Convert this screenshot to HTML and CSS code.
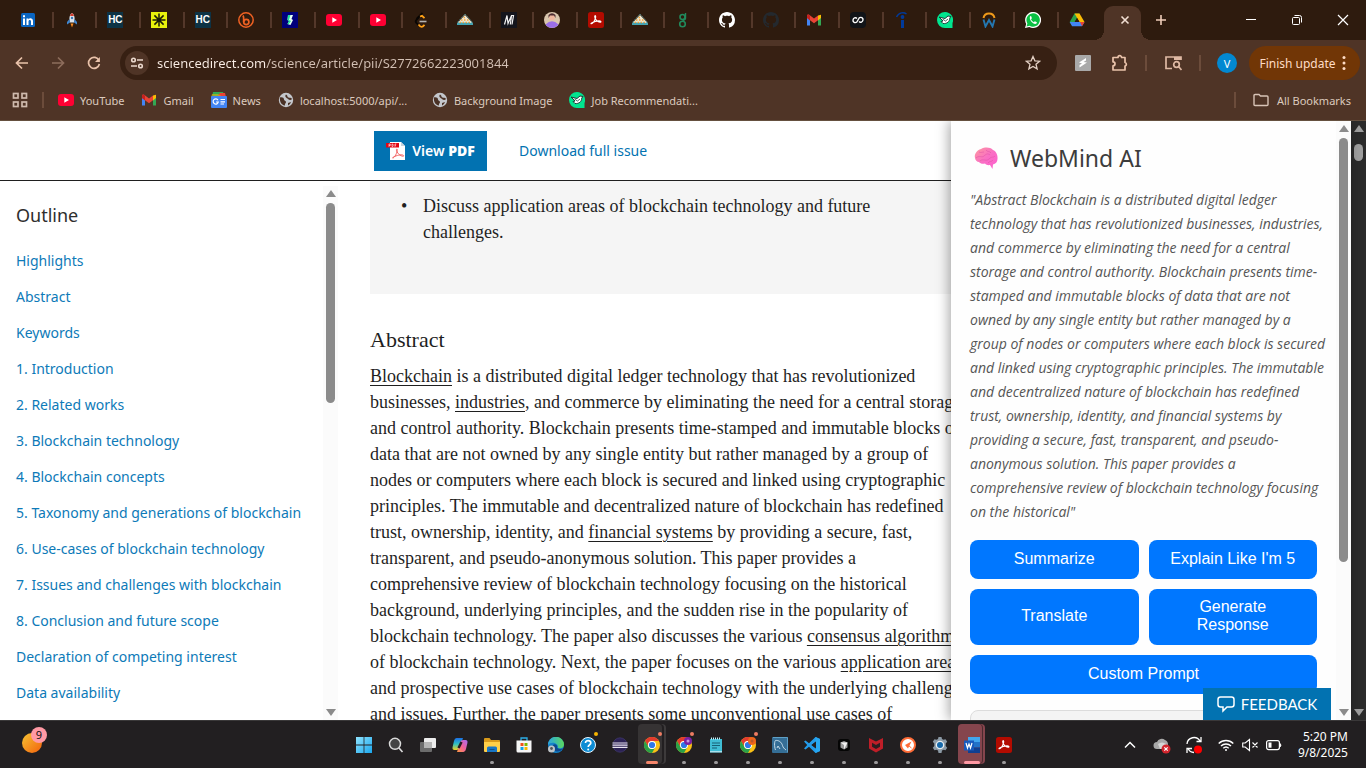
FILE: index.html
```html
<!DOCTYPE html>
<html lang="en">
<head>
<meta charset="utf-8">
<title>Blockchain technology - ScienceDirect</title>
<link rel="stylesheet" href="styles.css">
</head>
<body>
<svg class="defs" aria-hidden="true">
  <defs>
    <linearGradient id="g-win" x1="0" y1="0" x2="1" y2="1"><stop offset="0" stop-color="#8fe3ff"/><stop offset="1" stop-color="#1aa7ee"/></linearGradient>
    <linearGradient id="g-sun" x1="0" y1="0" x2="1" y2="1"><stop offset="0" stop-color="#f6c433"/><stop offset="1" stop-color="#f2600c"/></linearGradient>
    <linearGradient id="g-brain" x1="0" y1="0" x2="1" y2="1"><stop offset="0" stop-color="#ff9a9e"/><stop offset=".5" stop-color="#f96fc4"/><stop offset="1" stop-color="#ff5fd0"/></linearGradient>
    <linearGradient id="g-edge" x1="0" y1="0" x2="1" y2="0"><stop offset="0" stop-color="#2aa5e0"/><stop offset="1" stop-color="#5bd95e"/></linearGradient>
    <linearGradient id="g-cop1" x1="0" y1="0" x2="0" y2="1"><stop offset="0" stop-color="#1b6fe8"/><stop offset=".5" stop-color="#2fc0c0"/><stop offset="1" stop-color="#f0d020"/></linearGradient>
    <linearGradient id="g-cop2" x1="1" y1="0" x2="0" y2="1"><stop offset="0" stop-color="#a66cf5"/><stop offset=".5" stop-color="#f0609a"/><stop offset="1" stop-color="#ff9a40"/></linearGradient>
  </defs>
  <symbol id="i-youtube" viewBox="0 0 16 16"><rect y="2" width="16" height="12" rx="3" fill="#ff0033"/><path d="M6.3 5.3v5.4L11 8z" fill="#fff"/></symbol>
  <symbol id="i-gmail" viewBox="0 0 16 16"><path d="M1 4v9.5h3V8z" fill="#4285f4"/><path d="M15 4v9.5h-3V8z" fill="#34a853"/><path d="M12 3.6 15 2.8V6l-3 2.4z" fill="#fbbc04"/><path d="M1 3.8C1 2.500 2.400 2.200 3.500 2.900L8 6.400l4-3v4.800l-4 3-4-3L1 6z" fill="#ea4335"/><path d="M1 4v2l3 2.400V3.400C2.500 2 1 2.700 1 4z" fill="#c5221f"/></symbol>
  <symbol id="i-tents" viewBox="0 0 16 16"><path d="M8 3l8 8.500H0z" fill="#efe6cf"/><path d="M6.500 5.500h3M4 8h8M2.500 10.300h11" stroke="#f0a43c" stroke-width="1.300" stroke-dasharray="1.500 1.500"/><path d="M7.500 2.500h1L16 11v1.500H0V11z" fill="none" stroke="#6fc0c4" stroke-width=".8" stroke-dasharray="1.500 1"/><path d="M0 11.800q1.600-3 3.200 0 1.600-3 3.200 0 1.600-3 3.200 0 1.600-3 3.200 0 1.600-3 3.200 0v1.200H0z" fill="#42a5b3"/></symbol>
  <symbol id="i-github" viewBox="0 0 16 16"><path fill="currentColor" d="M8 0C3.580 0 0 3.580 0 8c0 3.540 2.290 6.530 5.470 7.590.4.070.550-.170.550-.380 0-.190-.010-.820-.010-1.490-2.010.370-2.530-.490-2.690-.940-.090-.230-.480-.940-.820-1.130-.280-.150-.680-.520-.010-.530.630-.010 1.080.580 1.230.820.720 1.210 1.870.870 2.330.660.070-.520.280-.870.510-1.070-1.780-.200-3.640-.890-3.640-3.950 0-.870.310-1.590.820-2.150-.080-.200-.360-1.020.080-2.120 0 0 .670-.210 2.200.820.640-.180 1.320-.270 2-.270s1.360.090 2 .270c1.530-1.040 2.200-.820 2.200-.820.440 1.100.160 1.920.080 2.120.510.560.820 1.270.820 2.150 0 3.070-1.870 3.750-3.650 3.950.290.250.540.730.540 1.480 0 1.070-.010 1.930-.010 2.200 0 .210.150.460.550.380A8.010 8.010 0 0 0 16 8c0-4.420-3.580-8-8-8z"/></symbol>
  <symbol id="i-bird" viewBox="0 0 16 16"><path d="M8 0a8 8 0 1 0 0 16h7.500V11A8 8 0 0 0 8 0z" fill="#00e58f"/><path d="M2 5l6 1.500L11 4l3 .5-1.200 1.500C12.800 9.500 10 12 6 11.500L4 9.500l2-.5z" fill="#fff" stroke="#173d38" stroke-width="1"/><path d="m5.500 7 3 2 2.500-2" fill="none" stroke="#173d38" stroke-width=".8"/></symbol>
  <symbol id="i-globe" viewBox="0 0 16 16"><circle cx="8" cy="8" r="7.200" fill="#c4c7cc"/><path d="M2 5.500c2.500-.5 4 .5 4 2s2 1 2 2.500-1.500 1.500-1 3.500C3 13 1.500 9 2 5.500zM8 2.500c2 1 1 2.500 2.500 3s2.500-.5 3.500 1.500c-1 1.500-3 1-4 0S6 5 8 2.500zM10 11l3-1c-.5 1.500-1.500 2.500-3 3.500z" fill="#4a3125"/></symbol>
  <symbol id="i-acrobat" viewBox="0 0 16 16"><rect width="16" height="16" rx="2.500" fill="#b30b00"/><path d="M3 11.700c1.500.8 4-3.500 4.600-6 .5-2-.9-2.800-.9-1 0 2.300 3 5.600 5.300 5.600 1.700-.1 1-1.400-1-1.400-2.200 0-5 .7-7 1.900-.8.400-1.200.7-1 .9z" fill="none" stroke="#fff" stroke-width="1.100"/></symbol>
  <symbol id="i-chrome" viewBox="0 0 16 16"><circle cx="8" cy="8" r="8" fill="#fbc116"/><path d="M1.070 4A8 8 0 0 1 14.930 4H8a4 4 0 0 0-3.500 6z" fill="#e33b2e"/><path d="M1.070 4A8 8 0 0 0 8 16l3.500-6a4 4 0 0 1-7 0z" fill="#2aa148"/><circle cx="8" cy="8" r="4" fill="#fff"/><circle cx="8" cy="8" r="3.100" fill="#2f78e8"/></symbol>
</svg>

<div class="window">
  <header class="browser">
    <div class="tabstrip">
      <div class="tabs">
        <button class="tab" aria-label="LinkedIn"><svg viewBox="0 0 16 16"><rect x="1" y="1" width="14" height="14" rx="1.500" fill="#0a66c2"/><path d="M3 6.500h2V13H3zM3 3.200h2v2H3zM6.500 6.500h2v1C9.500 5.700 13 5.900 13 9v4h-2V9.500c0-2-2.500-2-2.500 0V13h-2z" fill="#fff"/></svg></button>
        <button class="tab" aria-label="Rocket"><svg viewBox="0 0 16 16"><path d="M8 1c3 2 3 6 2 9.500H6C5 7 5 3 8 1z" fill="#dce3ea"/><path d="M8 1c1 .7 1.700 1.700 2 3H6c.3-1.300 1-2.300 2-3z" fill="#d23b2d"/><circle cx="8" cy="6" r="1.200" fill="#3b78b5"/><path d="M5.500 7 3 10v2.500l3-2zM10.500 7l2.500 3v2.500l-3-2z" fill="#3f86cf"/><path d="M6.500 11.500h3L8 15.500z" fill="#f68b1f"/></svg></button>
        <button class="tab"><span class="hc">HC</span></button>
        <button class="tab" aria-label="Burst"><svg viewBox="0 0 16 16"><rect width="16" height="16" fill="#e8f20c"/><path d="M8 1.500v13M1.500 8h13M3.400 3.400l9.200 9.200M12.600 3.400l-9.200 9.200" stroke="#1a1c08" stroke-width="1.500"/></svg></button>
        <button class="tab"><span class="hc">HC</span></button>
        <button class="tab" aria-label="Bitly"><svg viewBox="0 0 16 16"><circle cx="8" cy="8" r="7.200" fill="none" stroke="#ee6123" stroke-width="1.500"/><path d="M5 3.500c1.200 2 .5 4 .7 6.500" fill="none" stroke="#ee6123" stroke-width="1.700"/><circle cx="8.300" cy="10" r="2.600" fill="none" stroke="#ee6123" stroke-width="1.700"/></svg></button>
        <button class="tab" aria-label="Script"><svg viewBox="0 0 16 16"><rect width="16" height="16" fill="#00007c"/><path d="M6 3h5L9.500 7 11 8 8.500 13 5.500 12 7 9 5.500 8z" fill="#e8fff5"/><path d="M6 3h2.500L7 8l2 1-2.500 3.500-1-.5L7 9 5.500 8z" fill="#1de39b"/></svg></button>
        <button class="tab" aria-label="YouTube"><svg><use href="#i-youtube"/></svg></button>
        <button class="tab" aria-label="YouTube"><svg><use href="#i-youtube"/></svg></button>
        <button class="tab" aria-label="LeetCode"><svg viewBox="0 0 16 16"><path d="M9.500 1 3.500 7" stroke="#090604" stroke-width="1.800"/><path d="m6 5-2.500 3c-1 1-1 2 0 3l2.500 2.700" fill="none" stroke="#090604" stroke-width="1.800"/><path d="m7 4.500 2-.7 2.500 2.400M5.500 12.500C8 16 9.500 15 11.500 12.800" fill="none" stroke="#ffa116" stroke-width="1.800"/><path d="M6.500 9.500h7" stroke="#b3b3b3" stroke-width="1.600"/></svg></button>
        <button class="tab" aria-label="Camp"><svg><use href="#i-tents"/></svg></button>
        <button class="tab" aria-label="M"><svg viewBox="0 0 16 16"><rect width="16" height="16" fill="#14151c"/><path d="M3.500 12.500 6 3.500l1 8 3.500-8h2L11 12.500M10.500 4 9.300 12.500" fill="none" stroke="#f3f3f3" stroke-width="1.200"/></svg></button>
        <button class="tab" aria-label="Profile"><svg viewBox="0 0 16 16"><circle cx="8" cy="8" r="8" fill="#d9c6ad"/><path d="M1.500 12.500Q8 6 14.500 12.500A8 8 0 0 1 1.500 12.500z" fill="#9a6ee8"/><circle cx="8" cy="5.500" r="2.800" fill="#efb79e"/><path d="M4.500 6V3Q8-.5 11.500 3v3L10 3.500H6z" fill="#4d2c31"/></svg></button>
        <button class="tab" aria-label="Acrobat"><svg><use href="#i-acrobat"/></svg></button>
        <button class="tab" aria-label="Camp"><svg><use href="#i-tents"/></svg></button>
        <button class="tab" aria-label="Glassdoor"><svg viewBox="0 0 16 16"><circle cx="7.500" cy="5" r="2.500" fill="none" stroke="#218a5c" stroke-width="1.600"/><circle cx="7.500" cy="12" r="2.800" fill="none" stroke="#218a5c" stroke-width="1.600"/><path d="M10.500 1v5q0 2-3 2.500" fill="none" stroke="#218a5c" stroke-width="1.400"/></svg></button>
        <button class="tab" aria-label="GitHub"><svg class="white"><use href="#i-github"/></svg></button>
        <button class="tab" aria-label="GitHub"><svg class="ink"><use href="#i-github"/></svg></button>
        <button class="tab" aria-label="Gmail"><svg><use href="#i-gmail"/></svg></button>
        <button class="tab" aria-label="Loop"><svg viewBox="0 0 16 16"><rect width="16" height="16" rx="4" fill="#111418"/><path d="M7 10C5 11.500 2.700 10 3 8s2.500-3 4-1.500M9 6c2-1.500 4.300 0 4 2s-2.500 3-4 1.500M6.500 10.500l3-5" fill="none" stroke="#fff" stroke-width="1.400"/></svg></button>
        <button class="tab" aria-label="Indeed"><svg viewBox="0 0 16 16"><path d="M2.500 5C5 0 10 0 12.500 2" fill="none" stroke="#003a9b" stroke-width="1.400"/><circle cx="8.500" cy="5" r="1.900" fill="#003a9b"/><path d="M7 8h3v8H7z" fill="#003a9b"/></svg></button>
        <button class="tab" aria-label="Jobs"><svg><use href="#i-bird"/></svg></button>
        <button class="tab" aria-label="Wellfound"><svg viewBox="0 0 16 16"><path d="M2.500 6a5.600 5.600 0 0 1 11 0" fill="none" stroke="#ef9a1a" stroke-width="2"/><path d="m2.500 7.500 2 7 3.500-6.500 3.500 6.500 2-7" fill="none" stroke="#2477b0" stroke-width="1.900"/></svg></button>
        <button class="tab" aria-label="WhatsApp"><svg viewBox="0 0 16 16"><path d="M0 16l1.200-4A8 8 0 1 1 4.300 15z" fill="#fff"/><path d="M1.500 14.500l.9-3A6.700 6.700 0 1 1 4.600 13.700z" fill="#0ac144"/><path d="M5.500 4c-2 1.500.5 7 4.500 8 1.500 0 2.500-1.500 1.500-2l-1.700-.8-1 1C7.500 9.500 6.500 8.500 6 7.300l.9-1L6.200 4.200z" fill="#fff"/></svg></button>
        <button class="tab last" aria-label="Drive"><svg viewBox="0 0 16 16"><path d="M5.500 1.500h5L8 6 3.300 14.200.7 10z" fill="#2ba24c"/><path d="M5.500 1.500h5L15.500 10h-5z" fill="#fbbc04"/><path d="M.7 10h14.800L13 14.300H3.200z" fill="#4285f4"/><path d="M11 10h4.500L13 14.300z" fill="#ea4335"/><path d="M8 6l2.400 4H5.700z" fill="#2e1b0e"/></svg></button>
      </div>
      <div class="tab-active"><button aria-label="Close tab"><svg viewBox="0 0 16 16"><path d="m4.500 4.500 7 7m0-7-7 7" stroke="#f2dfd3" stroke-width="1.600"/></svg></button></div>
      <button class="new-tab" aria-label="New tab"><svg viewBox="0 0 16 16"><path d="M8 3v10M3 8h10" stroke="#efcdb9" stroke-width="1.600"/></svg></button>
      <div class="win-controls">
        <button aria-label="Minimize"><svg viewBox="0 0 16 16"><path d="M3 7.500h10" stroke="#fff"/></svg></button>
        <button aria-label="Restore"><svg viewBox="0 0 16 16" fill="none" stroke="#fff"><rect x="3.500" y="5.500" width="7" height="7" rx="1"/><path d="M5.500 3.500h5q2 0 2 2v5"/></svg></button>
        <button aria-label="Close"><svg viewBox="0 0 16 16"><path d="m3 3 10 10M13 3 3 13" stroke="#fff" stroke-width="1.200"/></svg></button>
      </div>
    </div>

    <div class="toolbar">
      <div class="nav">
        <button aria-label="Back"><svg viewBox="0 0 16 16"><path d="M14 8H3m5-5.500L2.500 8 8 13.500" fill="none" stroke="#eac3ab" stroke-width="1.700"/></svg></button>
        <button aria-label="Forward"><svg viewBox="0 0 16 16"><path d="M2 8h11M8 2.500 13.500 8 8 13.500" fill="none" stroke="#8d6d5c" stroke-width="1.700"/></svg></button>
        <button aria-label="Reload"><svg viewBox="0 0 16 16"><path d="M13 5.500a5.500 5.500 0 1 0 .4 3.500" fill="none" stroke="#eac3ab" stroke-width="1.700"/><path d="M13.900 2v5H9z" fill="#eac3ab"/></svg></button>
      </div>
      <div class="omnibox">
        <button class="site-info" aria-label="Site information"><svg viewBox="0 0 16 16" fill="none" stroke="#ead8cd" stroke-width="1.600"><circle cx="4.500" cy="5" r="1.800"/><path d="M8 5h6M2 11h6"/><circle cx="11.500" cy="11" r="1.800"/></svg></button>
        <input class="url" type="text" aria-label="Address" value="sciencedirect.com/science/article/pii/S2772662223001844">
        <button class="star" aria-label="Bookmark this tab"><svg viewBox="0 0 16 16"><path d="m8 1.500 1.900 4.300 4.700.4-3.600 3 1.100 4.600L8 11.400l-4.100 2.400L5 9.200 1.400 6.200l4.700-.4z" fill="none" stroke="#e2cfc3" stroke-width="1.300"/></svg></button>
      </div>
      <div class="extensions">
        <button aria-label="Extension"><svg viewBox="0 0 16 16"><rect width="16" height="16" rx="1" fill="#a9a9a9"/><path d="M4 7.500 11 3v2.500L8.500 7l3.500.5-7.500 5V10L7 8.500z" fill="#fff"/></svg></button>
        <button aria-label="Extensions"><svg viewBox="0 0 18 18"><path d="M2 3.500h5a1.800 1.800 0 0 1 3.600 0H14v5a1.800 1.800 0 0 1 0 3.500v4H2v-4.200a2 2 0 0 0 0-4z" fill="none" stroke="#eac3ab" stroke-width="1.700" stroke-linejoin="round"/></svg></button>
      </div>
      <span class="rule"></span>
      <button class="lens" aria-label="Search with Lens"><svg viewBox="0 0 18 18" fill="none" stroke="#dfb9a4" stroke-width="1.700"><path d="M8 14.500H2V3h15v3"/><path d="M10 4.500h7" stroke-width="3"/><circle cx="12.500" cy="10.500" r="2.800"/><path d="m14.500 12.500 3 3.500"/></svg></button>
      <span class="rule"></span>
      <button class="avatar">V</button>
      <button class="update">Finish update <svg viewBox="0 0 4 16"><circle cx="2" cy="2.500" r="1.500"/><circle cx="2" cy="8" r="1.500"/><circle cx="2" cy="13.500" r="1.500"/></svg></button>
    </div>

    <nav class="bookmarks">
      <button class="apps" aria-label="Apps"><svg viewBox="0 0 16 16" fill="none" stroke="#cfbaad" stroke-width="1.700"><rect x="1.500" y="1.500" width="4.500" height="4.500"/><rect x="10" y="1.500" width="4.500" height="4.500"/><rect x="1.500" y="10" width="4.500" height="4.500"/><rect x="10" y="10" width="4.500" height="4.500"/></svg></button>
      <span class="rule"></span>
      <a href="#"><svg><use href="#i-youtube"/></svg>YouTube</a>
      <a href="#"><svg><use href="#i-gmail"/></svg>Gmail</a>
      <a href="#"><svg viewBox="0 0 16 16"><path d="M2 0h10l2 5H1z" fill="#34a853"/><path d="M9 1h5l1 4H6z" fill="#ea4335"/><path d="M1 2h6l5 3H0z" fill="#fbbc04" opacity=".5"/><rect y="4" width="16" height="12" rx="1" fill="#4285f4"/><path d="M9.500 7.500H14m-4.500 2.300H14M9.500 12H13M7 8.200A2.600 2.600 0 1 0 7.300 10H5" fill="none" stroke="#fff" stroke-width="1.200"/></svg>News</a>
      <a class="long" href="#"><svg><use href="#i-globe"/></svg>localhost:5000/api/...</a>
      <a href="#"><svg><use href="#i-globe"/></svg>Background Image</a>
      <a href="#"><svg><use href="#i-bird"/></svg>Job Recommendati...</a>
      <span class="rule push"></span>
      <a class="all" href="#"><svg viewBox="0 0 16 16"><path d="M1 3.500q0-1 1-1h4L7.500 4H14q1 0 1 1v7.500q0 1-1 1H2q-1 0-1-1z" fill="none" stroke="#d8c3b6" stroke-width="1.400"/></svg>All Bookmarks</a>
    </nav>
  </header>

  <main class="page">
    <div class="site">
      <div class="actions">
        <button class="view-pdf"><svg viewBox="0 0 20 20"><path d="M4 1h11l4 4v14H4z" fill="#fff"/><path d="M15 1v4h4z" fill="#c9d3dc"/><rect y="2" width="13" height="4.500" fill="#e30613"/><path d="M3 5.800V3h1.300v1.500H3M6 5.500V3h.8q.8 1.200 0 2.500zM9 5.800V3h1.300M9 4.300h1" fill="none" stroke="#fff" stroke-width=".6"/><path d="M6.500 17c2 .5 5-6 4.800-8.500-.3-1.300-1.400 0-.6 1.500 1.300 3 3.500 5 6.500 5.300 1.200-.2.300-1.600-2-1.500-3 .2-8 1.700-8.700 3.200z" fill="none" stroke="#f15b5b" stroke-width=".9"/></svg><span>View <b>PDF</b></span></button>
        <a href="#">Download full issue</a>
      </div>
      <div class="columns">
        <aside class="outline">
          <nav class="outline-list">
            <h2>Outline</h2>
            <a href="#">Highlights</a>
            <a href="#">Abstract</a>
            <a href="#">Keywords</a>
            <a href="#">1. Introduction</a>
            <a href="#">2. Related works</a>
            <a href="#">3. Blockchain technology</a>
            <a href="#">4. Blockchain concepts</a>
            <a href="#">5. Taxonomy and generations of blockchain</a>
            <a href="#">6. Use-cases of blockchain technology</a>
            <a href="#">7. Issues and challenges with blockchain</a>
            <a href="#">8. Conclusion and future scope</a>
            <a href="#">Declaration of competing interest</a>
            <a href="#">Data availability</a>
          </nav>
          <div class="scrollbar"><i class="up"></i><span class="track"><b class="outline-thumb"></b></span><i class="down"></i></div>
        </aside>
        <article class="article">
          <ul class="highlights"><li>Discuss application areas of blockchain technology and future<br>challenges.</li></ul>
          <h2>Abstract</h2>
          <p><a href="#">Blockchain</a> is a distributed digital ledger technology that has revolutionized<br>
          businesses, <a href="#">industries</a>, and commerce by eliminating the need for a central storage<br>
          and control authority. Blockchain presents time-stamped and immutable blocks of<br>
          data that are not owned by any single entity but rather managed by a group of<br>
          nodes or computers where each block is secured and linked using cryptographic<br>
          principles. The immutable and decentralized nature of blockchain has redefined<br>
          trust, ownership, identity, and <a href="#">financial systems</a> by providing a secure, fast,<br>
          transparent, and pseudo-anonymous solution. This paper provides a<br>
          comprehensive review of blockchain technology focusing on the historical<br>
          background, underlying principles, and the sudden rise in the popularity of<br>
          blockchain technology. The paper also discusses the various <a href="#">consensus algorithms</a><br>
          of blockchain technology. Next, the paper focuses on the various <a href="#">application areas</a><br>
          and prospective use cases of blockchain technology with the underlying challenges<br>
          and issues. Further, the paper presents some unconventional use cases of</p>
        </article>
      </div>
    </div>
    <div class="scrollbar page-scroll"><i class="up"></i><span class="track"><b class="page-thumb"></b></span><i class="down"></i></div>

    <aside class="assistant">
      <div class="assistant-body">
        <h1><svg viewBox="0 0 24 22"><path d="M1 11C0 7 3 3 7 2c4-2 9-2 12 1 3 1 5 5 4.500 9 0 3-2 5-4.500 5.500L18.500 22 16 18c-2 .5-4-.3-5-1.500-2 .5-5 .3-6-1.500-2 0-3.800-2-4-4z" fill="url(#g-brain)"/><path d="M5 5c2 1 3 0 5 0M2 11c3-3 6 0 8-2s4-3 6-1M12 3c1 2 4 1 5 3M6 14c3-3 6 1 9-2s4-1 6-3M14 16c1-2 4-1 5-3" fill="none" stroke="#e055a8" stroke-width=".6"/></svg>WebMind AI</h1>
        <p>"Abstract Blockchain is a distributed digital ledger<br>
        technology that has revolutionized businesses, industries,<br>
        and commerce by eliminating the need for a central<br>
        storage and control authority. Blockchain presents time-<br>
        stamped and immutable blocks of data that are not<br>
        owned by any single entity but rather managed by a<br>
        group of nodes or computers where each block is secured<br>
        and linked using cryptographic principles. The immutable<br>
        and decentralized nature of blockchain has redefined<br>
        trust, ownership, identity, and financial systems by<br>
        providing a secure, fast, transparent, and pseudo-<br>
        anonymous solution. This paper provides a<br>
        comprehensive review of blockchain technology focusing<br>
        on the historical"</p>
        <div class="prompts">
          <button>Summarize</button>
          <button>Explain Like I'm 5</button>
          <button>Translate</button>
          <button>Generate<br>Response</button>
          <button class="wide">Custom Prompt</button>
        </div>
        <div class="output"></div>
      </div>
      <div class="scrollbar"><i class="up"></i><span class="track"><b class="assistant-thumb"></b></span><i class="down"></i></div>
    </aside>
    <button class="feedback"><svg viewBox="0 0 18 18"><path d="M3.500 2h11Q17 2 17 4.500v5q0 2.500-2.500 2.500H10l-4 4v-4H3.500Q1 12 1 9.500v-5Q1 2 3.500 2z" fill="none" stroke="#fff" stroke-width="1.500"/></svg>FEEDBACK</button>
  </main>

  <footer class="taskbar">
    <div class="widgets"><button aria-label="Widgets"><svg viewBox="0 0 20 20"><circle cx="10" cy="10" r="10" fill="url(#g-sun)"/></svg><span class="badge">9</span></button></div>
    <div class="apps-row">
      <button aria-label="Start"><svg viewBox="0 0 16 16"><path d="M0 0h7.600v7.600H0zM8.400 0H16v7.600H8.400zM0 8.400h7.600V16H0zM8.400 8.400H16V16H8.400z" fill="url(#g-win)"/></svg></button>
      <button aria-label="Search"><svg viewBox="0 0 16 16"><circle cx="7" cy="6.800" r="5.500" fill="#444" stroke="#dadada" stroke-width="1.500"/><path d="m11 11 3.500 4" stroke="#dadada" stroke-width="1.700"/></svg></button>
      <button aria-label="Task view"><svg viewBox="0 0 16 16"><rect y="5" width="12" height="10" rx="1" fill="#6c6c6c"/><rect x="4" y="1" width="12" height="10" rx="1" fill="#ededed"/><path d="M4 5h8v6H4z" fill="#b5b5b5"/></svg></button>
      <button aria-label="Copilot"><svg viewBox="0 0 16 16"><path d="M4.500 1H11L8 10q-.8 3-3 3H2.500Q0 13 .6 10L2 4q.6-3 2.500-3z" fill="url(#g-cop1)"/><path d="M11.500 15H5L8 6q.8-3 3-3h2.500Q16 3 15.400 6L14 12q-.6 3-2.500 3z" fill="url(#g-cop2)"/><path d="M9.500 5 6.500 11" stroke="#231f22" stroke-width="2.500"/></svg></button>
      <button class="open" aria-label="File Explorer"><svg viewBox="0 0 16 16"><path d="M0 2q0-1 1-1h4.500L7 3h8q1 0 1 1v10H0z" fill="#d99a1b"/><path d="M0 5h16v9q0 1-1 1H1q-1 0-1-1z" fill="#ffcf48"/><path d="M3 11q0-1.500 1.500-1.500h7q1.500 0 1.500 1.500v4H3z" fill="#1976c5"/><path d="M5.500 12.500h5" stroke="#0d528f"/></svg></button>
      <button aria-label="Microsoft Store"><svg viewBox="0 0 16 16"><path d="M5 4V1h6v3" fill="none" stroke="#2caee7" stroke-width="1.300"/><path d="M.5 3.500h15V14q0 1.500-1.500 1.500H2Q.5 15.500.5 14z" fill="#f5f5f5"/><path d="M4.500 6h3v3h-3z" fill="#f1511b"/><path d="M8.500 6h3v3h-3z" fill="#80b900"/><path d="M4.500 10h3v3h-3z" fill="#10a3e8"/><path d="M8.500 10h3v3h-3z" fill="#fbb800"/></svg></button>
      <button aria-label="Edge"><svg viewBox="0 0 16 16"><circle cx="8" cy="8" r="8" fill="#1482c8"/><path d="M0 8a8 8 0 0 1 16-.5C16 11 12 12 10 11c1-5-7-7-10-3z" fill="url(#g-edge)"/><path d="M5 8c2-2 5 0 4 2.500 1.500 2 4.500 1.500 6 .5C12 17 3 15 5 8z" fill="#0c488e"/><circle cx="3.500" cy="12" r="3.500" fill="#bfc4c8"/><circle cx="3.500" cy="11.500" r="1.400" fill="#50565b"/></svg></button>
      <button aria-label="Get help"><svg viewBox="0 0 16 16"><circle cx="8" cy="8" r="7.500" fill="#0e8cd4" stroke="#eef7fd"/><path d="M5.500 6C5.500 2.500 11 3 10.800 6 10.500 8 8.200 7.800 8.200 10" fill="none" stroke="#fff" stroke-width="1.700"/><circle cx="8.200" cy="12.400" r="1" fill="#fff"/></svg><span class="dot gold"></span></button>
      <button aria-label="Eclipse"><svg viewBox="0 0 16 16"><circle cx="8" cy="8" r="7.200" fill="#2c2255" stroke="#46407a" stroke-width=".6"/><path d="M.5 6h15M.5 8.200h15M.5 10.400h15" stroke="#e7e2ef" stroke-width="1.200"/></svg></button>
      <button class="active" aria-label="Chrome"><svg><use href="#i-chrome"/></svg><span class="dot"></span></button>
      <button class="open" aria-label="Chrome profile"><svg viewBox="0 0 16 16"><use href="#i-chrome"/><circle cx="12" cy="4" r="4" fill="#7a20a5"/><circle cx="12" cy="4" r="1.500" fill="#c796de"/></svg><span class="dot"></span></button>
      <button class="open" aria-label="Notepad"><svg viewBox="0 0 16 16"><rect x="2" y="2" width="12" height="13.500" fill="#40bdd5"/><path d="M4 6h8M4 8.500h8M4 11h5" stroke="#176177" stroke-width="1.200"/><path d="M3 1.500h10" stroke="#c8f5ff" stroke-width="2" stroke-dasharray="1 1"/><path d="M2 14.800h12" stroke="#d7eff5"/></svg></button>
      <button class="open" aria-label="Chrome profile"><svg viewBox="0 0 16 16"><use href="#i-chrome"/><circle cx="12" cy="4" r="4" fill="#ed651b"/><circle cx="12" cy="4" r="1.500" fill="#b7592b"/></svg><span class="dot"></span></button>
      <button class="open" aria-label="MySQL Workbench"><svg viewBox="0 0 16 16"><rect width="16" height="16" rx="1" fill="#356e96"/><path d="M1 .5h14.500v15" fill="none" stroke="#5fa0c7"/><path d="M3.500 13C2 9 2.500 4 3.500 3.500c3-.5 6 1.500 7 5 .5 2 1.500 3 3.500 4.500M5 11l1-2 2 3" fill="none" stroke="#d3e4ef" stroke-width=".9"/></svg></button>
      <button class="open" aria-label="Visual Studio Code"><svg viewBox="0 0 16 16"><path d="M11.500 0 16 2v12l-4.500 2L5 9.800 1.500 12.500 0 11.500 3.200 8 0 4.500l1.500-1L5 6.200zM12 4.500 7.500 8l4.500 3.500z" fill="#239bea"/><path d="M11.500 0 16 2v12l-4.500 2z" fill="#27a7f2"/><path d="M12 4.500v7L7.500 8z" fill="#231f22"/></svg></button>
      <button class="open" aria-label="Cursor"><svg viewBox="0 0 16 16"><rect x="2" y="2" width="12" height="12" rx="3" fill="#050505"/><path d="M4.500 5.500 8 4l3.500 1.500v5L8 12.500 4.500 10.500z" fill="#9a9a9a"/><path d="M4.500 5.500h7L8 12.500V8z" fill="#f0f0f0"/></svg></button>
      <button class="open" aria-label="McAfee"><svg viewBox="0 0 16 16"><path d="m1 1 7 3.500L15 1v10.500L8 15.500l-7-4z" fill="#bf1e28"/><path d="M4 5.800 8 8l4-2.200v4L8 12 4 9.800z" fill="#2c1d20"/></svg></button>
      <button class="open" aria-label="Postman"><svg viewBox="0 0 16 16"><circle cx="8" cy="8" r="7" fill="#fff" stroke="#ff6c37" stroke-width="2"/><path d="M11.500 4.500 5 8l3 3.500z" fill="#ff6c37"/><path d="m8.500 8.500 3 2.500" stroke="#ff6c37"/></svg></button>
      <button class="open" aria-label="Settings"><svg viewBox="0 0 16 16"><path d="M6.500 0h3l.5 2 1.500.8 2-.6 1.700 2.600-1.500 1.700v2.500l1.500 1.700-1.700 2.600-2-.6-1.500.8-.5 2.500h-3L6 13.500l-1.500-.8-2 .6L.8 10.700 2.300 9V6.500L.8 4.800l1.700-2.600 2 .6L6 2z" fill="#8c9aa6"/><circle cx="8" cy="8" r="4.300" fill="#e7edf1"/><circle cx="8" cy="8" r="3" fill="#1769aa"/></svg></button>
      <button class="active word" aria-label="Word"><svg viewBox="0 0 16 16"><rect x="4" y="0" width="12" height="5.500" fill="#41a5ee"/><rect x="4" y="5" width="12" height="5.500" fill="#2272c8"/><rect x="4" y="10.500" width="12" height="5.500" fill="#103f91"/><rect x="0" y="3.500" width="10" height="10" fill="#185abd"/><path d="m2 6 1.500 5L5 7l1.500 4L8 6" fill="none" stroke="#fff" stroke-width="1.200"/></svg></button>
      <button class="open" aria-label="Acrobat"><svg><use href="#i-acrobat"/></svg></button>
    </div>
    <div class="tray">
      <button aria-label="Hidden icons"><svg viewBox="0 0 16 16"><path d="m3 10.500 5-5 5 5" fill="none" stroke="#fff" stroke-width="1.500"/></svg></button>
      <button aria-label="OneDrive"><svg viewBox="0 0 18 18"><path d="M4 13a3.500 3.500 0 0 1 0-7 5 5 0 0 1 8-2 5 5 0 0 1 3 5v4z" fill="#a8a8a8"/><path d="M7 13 5 8q4-3 8 0l1 5z" fill="#d5d5d5"/><circle cx="13" cy="13" r="4.500" fill="#d2262e"/><path d="m11.300 11.300 3.400 3.400m0-3.400-3.400 3.400" stroke="#fff" stroke-width="1.200"/></svg></button>
      <button aria-label="Updates"><svg viewBox="0 0 18 18"><path d="M2 8a7 7 0 0 1 13-3M16 1v4.500h-4.500M2 17v-4.500h5M3 12.500a7 7 0 0 0 6 4" fill="none" stroke="#fff" stroke-width="1.300"/><circle cx="13" cy="13.500" r="4" fill="#f00"/></svg></button>
      <button class="status" aria-label="Network, volume and battery">
        <svg viewBox="0 0 16 16" fill="none" stroke="#fff" stroke-width="1.400"><path d="M.7 6.500a10.500 10.500 0 0 1 14.600 0M3 9a7.200 7.200 0 0 1 10 0M5.300 11.300a3.900 3.900 0 0 1 5.400 0"/><circle cx="8" cy="13" r="1" fill="#fff" stroke="none"/></svg>
        <svg viewBox="0 0 16 16" fill="none" stroke="#fff" stroke-width="1.100"><path d="M.7 6v4h2.500L7.500 13.500v-11L3.200 6zM10.500 5.500l5 5m0-5-5 5"/></svg>
        <svg viewBox="0 0 16 16"><rect x=".6" y="3.600" width="12.800" height="9" rx="2" fill="none" stroke="#fff" stroke-width="1.200"/><rect x="2.500" y="5.500" width="3" height="5.200" fill="#fff"/><path d="M14 6.500q2 1.500 0 3.500z" fill="#fff" stroke="#fff" stroke-width=".8"/></svg>
      </button>
      <time>5:20 PM<br>9/8/2025</time>
    </div>
  </footer>
</div>
</body>
</html>
```
FILE: styles.css
```css
* { box-sizing: border-box; }
body { margin: 0; background: #fff; color: #1f1f1f; font-family: "Noto Sans", sans-serif; }
button { border: 0; padding: 0; background: none; color: inherit; font: inherit; display: flex; align-items: center; justify-content: center; cursor: pointer; }
a { text-decoration: none; color: inherit; }
svg { width: 16px; height: 16px; flex: none; display: block; }
.defs { position: absolute; width: 0; height: 0; }
.window { height: 100vh; display: flex; flex-direction: column; overflow: hidden; }

/* Browser frame */
.browser { background: #4f3426; color: #dccabe; font-size: 11px; border-bottom: 1px solid #65503f; }
.tabstrip { display: flex; height: 40px; background: #2e1b0e; }
.tabs { flex: 1; display: flex; align-items: center; margin-left: 10px; max-width: 1100px; }
.tab { flex: 1; height: 16px; justify-content: flex-start; padding-left: 10px; border-right: 2px solid #54382a; }
.tab.last { border-color: transparent; }
.hc { width: 16px; height: 16px; background: #0d3345; color: #fff; font: 700 10px/16px "Liberation Sans", sans-serif; text-align: center; }
.white { color: #fff; }
.ink { color: #24292e; }
.tab-active { width: 37px; height: 34px; margin: 6px 0 0 2px; background: #4f3426; border-radius: 9px 9px 0 0; display: flex; align-items: center; padding: 0 0 6px 13px; position: relative; }
.tab-active::before, .tab-active::after { content: ""; position: absolute; bottom: 0; width: 10px; height: 10px; }
.tab-active::before { left: -10px; background: radial-gradient(circle at 0 0, #2e1b0e 10px, #4f3426 10px); }
.tab-active::after { right: -10px; background: radial-gradient(circle at 100% 0, #2e1b0e 10px, #4f3426 10px); }
.new-tab { width: 40px; }
.win-controls { display: flex; margin-left: 47px; }
.win-controls button { width: 46px; }
.toolbar { height: 46px; display: flex; align-items: center; padding: 0 6px 0 4px; }
.nav { display: flex; width: 116px; }
.nav button { width: 36px; height: 36px; }
.omnibox { flex: 1; height: 34px; border-radius: 17px; background: #372013; display: flex; align-items: center; padding: 0 16px 0 5px; }
.site-info { width: 24px; height: 24px; border-radius: 50%; background: #4f3426; }
.url { flex: 1; min-width: 0; margin-left: 8px; border: 0; padding: 0; outline: 0; font: 13px "Noto Sans", sans-serif; color: transparent; background: linear-gradient(90deg, #fbeee6 109px, #d3c0b4 109px); -webkit-background-clip: text; background-clip: text; }
.extensions { display: flex; gap: 20px; margin: 0 16px 0 18px; align-items: center; }
.extensions button:last-child svg, .lens svg { width: 18px; height: 18px; }
.rule { width: 2px; height: 16px; background: #6c4c3b; }
.lens { width: 52px; }
.avatar { width: 20px; height: 20px; border-radius: 50%; background: #0288d1; color: #fff; margin: 0 12px 0 16px; }
.update { width: 111px; height: 34px; border-radius: 17px; background: #713606; color: #ffdcc5; font-size: 12px; gap: 6px; padding-right: 4px; white-space: nowrap; }
.update svg { width: 4px; fill: #ffdcc5; }
.bookmarks { height: 34px; display: flex; align-items: center; padding: 0 15px 6px 12px; gap: 17px; white-space: nowrap; }
.bookmarks a { display: flex; align-items: center; gap: 6px; }
.bookmarks .long { min-width: 137px; }
.bookmarks .rule { margin: 0 -3px; }
.bookmarks .push { margin-left: auto; margin-right: 0; }
.bookmarks .all { gap: 8px; }

/* Page */
.page { flex: 1; min-height: 0; display: flex; position: relative; overflow: hidden; }
.site { flex: 1; min-width: 0; display: flex; flex-direction: column; }
.actions { height: 60px; flex: none; border-bottom: 1px solid #1f1f1f; display: flex; align-items: center; gap: 32px; padding-left: 374px; font-size: 14px; color: #0272b1; }
.view-pdf { height: 40px; width: 113px; gap: 6px; background: #0272b1; color: #fff; font-weight: 600; }
.view-pdf svg { width: 20px; height: 20px; }
.columns { flex: 1; min-height: 0; display: flex; }
.outline { width: 338px; flex: none; display: flex; padding-top: 5px; }
.outline-list { flex: 1; padding: 11px 0 0 16px; overflow: hidden; font-size: 14px; color: #0d7ab8; white-space: nowrap; }
.outline-list h2 { margin: 0 0 10px; font-size: 18px; line-height: 36px; font-weight: 400; color: #2e2e2e; }
.outline-list a { display: block; line-height: 36px; }
.scrollbar { width: 15px; flex: none; display: flex; flex-direction: column; align-items: center; background: #fbfbfb; padding: 4px 0; color: #8b8b8b; }
.scrollbar i { width: 0; height: 0; border: 5px solid transparent; }
.scrollbar .up { border-top: 0; border-bottom: 7px solid currentColor; }
.scrollbar .down { border-bottom: 0; border-top: 7px solid currentColor; }
.track { flex: 1; width: 9px; padding: 6px 0; }
.track b { display: block; width: 9px; border-radius: 5px; background: currentColor; }
.outline-thumb { height: 40%; }
.assistant-thumb { height: 75%; }
.page-thumb { height: 17px; }
.page-scroll { background: #2b2b2b; color: #9f9f9f; }
.page-scroll .track { padding-top: 12px; }
.article { flex: 1; min-width: 0; margin-left: 32px; overflow: hidden; font-family: "Liberation Serif", serif; font-size: 18px; line-height: 26px; white-space: nowrap; }
.highlights { margin: 0; padding: 12px 0 49px 53px; background: #f5f5f5; list-style: none; }
.highlights li::before { content: "•"; display: inline-block; width: 22px; margin-left: -22px; }
.article h2 { margin: 30px 0 8px; font-size: 22px; line-height: 31px; font-weight: 400; }
.article p { margin: 0; }
.article a { text-decoration: underline; text-underline-offset: 3px; text-decoration-thickness: 1px; }

/* Assistant panel */
.assistant { position: absolute; top: 0; right: 15px; bottom: 0; width: 400px; background: #fefefe; box-shadow: -2px 0 12px rgba(0, 0, 0, .35); display: flex; }
.assistant-body { flex: 1; overflow: hidden; padding: 19px 19px 0; }
.assistant h1 { margin: 0 0 12px; padding-left: 4px; display: flex; align-items: center; gap: 12px; font-size: 23px; line-height: 36px; font-weight: 400; color: #3c3c3c; }
.assistant h1 svg { width: 24px; height: 22px; }
.assistant p { margin: 0 0 16px; font: italic 14px/24px "Open Sans", sans-serif; color: #555; white-space: nowrap; }
.prompts { display: grid; grid-template-columns: 1fr 1fr; gap: 10px; font: 16px/18px "Liberation Sans", sans-serif; }
.prompts button { min-height: 39px; padding: 9px 10px 11px; border-radius: 8px; background: #07f; color: #fff; }
.prompts .wide { grid-column: 1 / -1; }
.output { height: 60px; margin-top: 16px; border: 1px solid #dcdcdc; border-radius: 8px; background: #f4f4f4; }
.feedback { position: absolute; right: 35px; bottom: 0; width: 128px; height: 32px; gap: 6px; background: #0272b1; color: #fff; font: 15px Lato, sans-serif; }
.feedback svg { width: 18px; height: 18px; }

/* Taskbar */
.taskbar { height: 48px; flex: none; background: #221f21; border-top: 1px solid #3a3839; display: grid; grid-template-columns: 1fr auto 1fr; padding-left: 2px; color: #fff; font-size: 12px; }
.widgets { padding: 12px 0 0 20px; }
.widgets button { position: relative; }
.widgets svg { width: 20px; height: 20px; }
.badge { position: absolute; left: 9px; top: -6px; width: 16px; height: 16px; border-radius: 50%; background: #ff99a4; color: #111; font-size: 11px; line-height: 16px; }
.apps-row { display: flex; }
.apps-row button { width: 32px; position: relative; }
.apps-row .open::after, .apps-row .active::after { content: ""; position: absolute; bottom: 4px; left: 14px; width: 4px; height: 3px; border-radius: 2px; background: #9c9a9b; }
.apps-row .active::before { content: ""; position: absolute; inset: 3px 6px 4px 2px; border-radius: 4px; background: #363334; box-shadow: 2px 0 0 #221f21, 4px 0 0 #3d3a3b; }
.apps-row .active svg { position: relative; z-index: 1; }
.apps-row .active::after { left: 10px; width: 12px; background: #f5866b; }
.apps-row .word::before { background: #85454d; box-shadow: 1px 0 0 #4a2a2e, 3px 0 0 #85454d; }
.apps-row .word::after { background: #ff99a4; left: 8px; width: 16px; }
.dot { position: absolute; top: 11px; right: 6px; width: 4px; height: 4px; border-radius: 50%; background: #ee7c62; z-index: 2; }
.gold { background: #f7b500; }
.tray { display: flex; align-items: center; justify-content: flex-end; padding-right: 18px; }
.tray > button { width: 32px; height: 32px; }
.tray > button:nth-child(2) svg, .tray > button:nth-child(3) svg { width: 18px; height: 18px; }
.tray .status { width: auto; gap: 8px; margin: 0 16px 0 8px; }
.tray time { line-height: 16px; text-align: right; white-space: nowrap; }
```
